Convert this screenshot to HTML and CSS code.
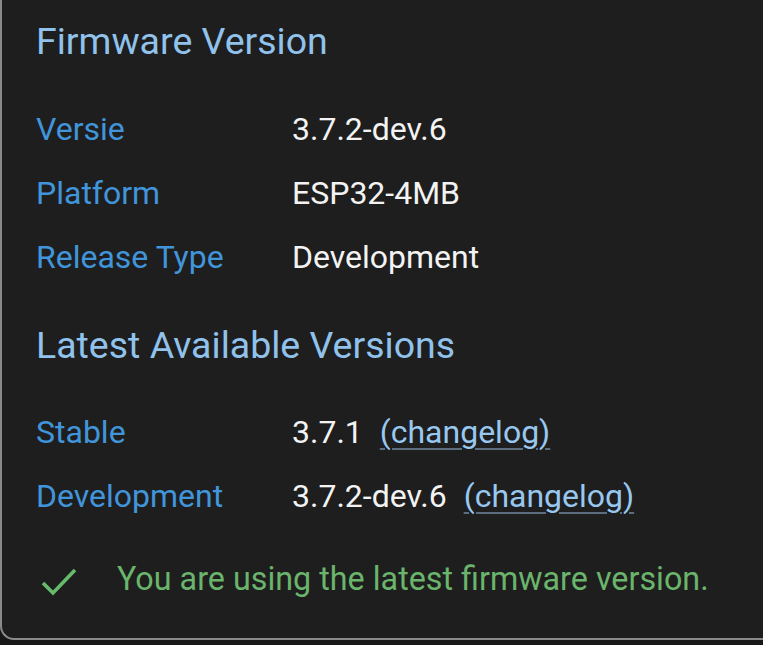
FILE: index.html
```html
<!DOCTYPE html>
<html>
<head>
<meta charset="utf-8">
<link rel="stylesheet" href="styles.css">
</head>
<body>
<div class="card">
  <h2 class="section-title">Firmware Version</h2>
  <div class="info-grid">
    <div class="label">Versie</div><div class="value">3.7.2-dev.6</div>
    <div class="label">Platform</div><div class="value">ESP32-4MB</div>
    <div class="label">Release Type</div><div class="value">Development</div>
  </div>
  <h2 class="section-title second">Latest Available Versions</h2>
  <div class="info-grid latest">
    <div class="label">Stable</div><div class="value">3.7.1 <a class="changelog" href="#">(changelog)</a></div>
    <div class="label">Development</div><div class="value">3.7.2-dev.6 <a class="changelog" href="#">(changelog)</a></div>
  </div>
  <div class="status">
    <svg class="check" width="42" height="36" viewBox="0 0 42 36"><polyline points="7,22 17,32 39,9" fill="none" stroke="#66bb6a" stroke-width="3.6"/></svg>
    <span class="status-text">You are using the latest firmware version.</span>
  </div>
</div>
</body>
</html>
```

FILE: styles.css
```css
html, body {
  margin: 0;
  padding: 0;
  background: #181818;
  overflow: hidden;
  height: 645px;
}
body {
  font-family: Roboto, "Noto Sans", sans-serif;
}
.card {
  background: #1e1e1e;
  border-left: 2px solid #8a8a8a;
  border-bottom: 2px solid #8a8a8a;
  border-bottom-left-radius: 14px;
  width: 800px;
  height: 640px;
  box-sizing: border-box;
  padding: 17px 0 0 34px;
}
.section-title {
  margin: 0;
  font-weight: 400;
  font-size: 37.5px;
  line-height: 48px;
  color: #90c2ec;
}
.section-title.second {
  margin-top: 32px;
}
.info-grid {
  display: grid;
  grid-template-columns: 256px auto;
  grid-auto-rows: 64px;
  align-items: center;
  margin-top: 32px;
  font-size: 32px;
}
.info-grid.latest {
  margin-top: 31px;
}
.label {
  color: #4195da;
}
.value {
  color: #f3f3f3;
}
.changelog {
  margin-left: 9px;
  color: #98c8f0;
  text-decoration: underline;
  text-decoration-color: #5b6d7e;
  text-decoration-thickness: 2px;
  text-underline-offset: 5px;
}
.status {
  display: flex;
  align-items: center;
  margin-top: 32px;
}
.check {
  flex: none;
  margin-right: 39px;
}
.status-text {
  font-size: 32.3px;
  color: #6ab46c;
}
```
